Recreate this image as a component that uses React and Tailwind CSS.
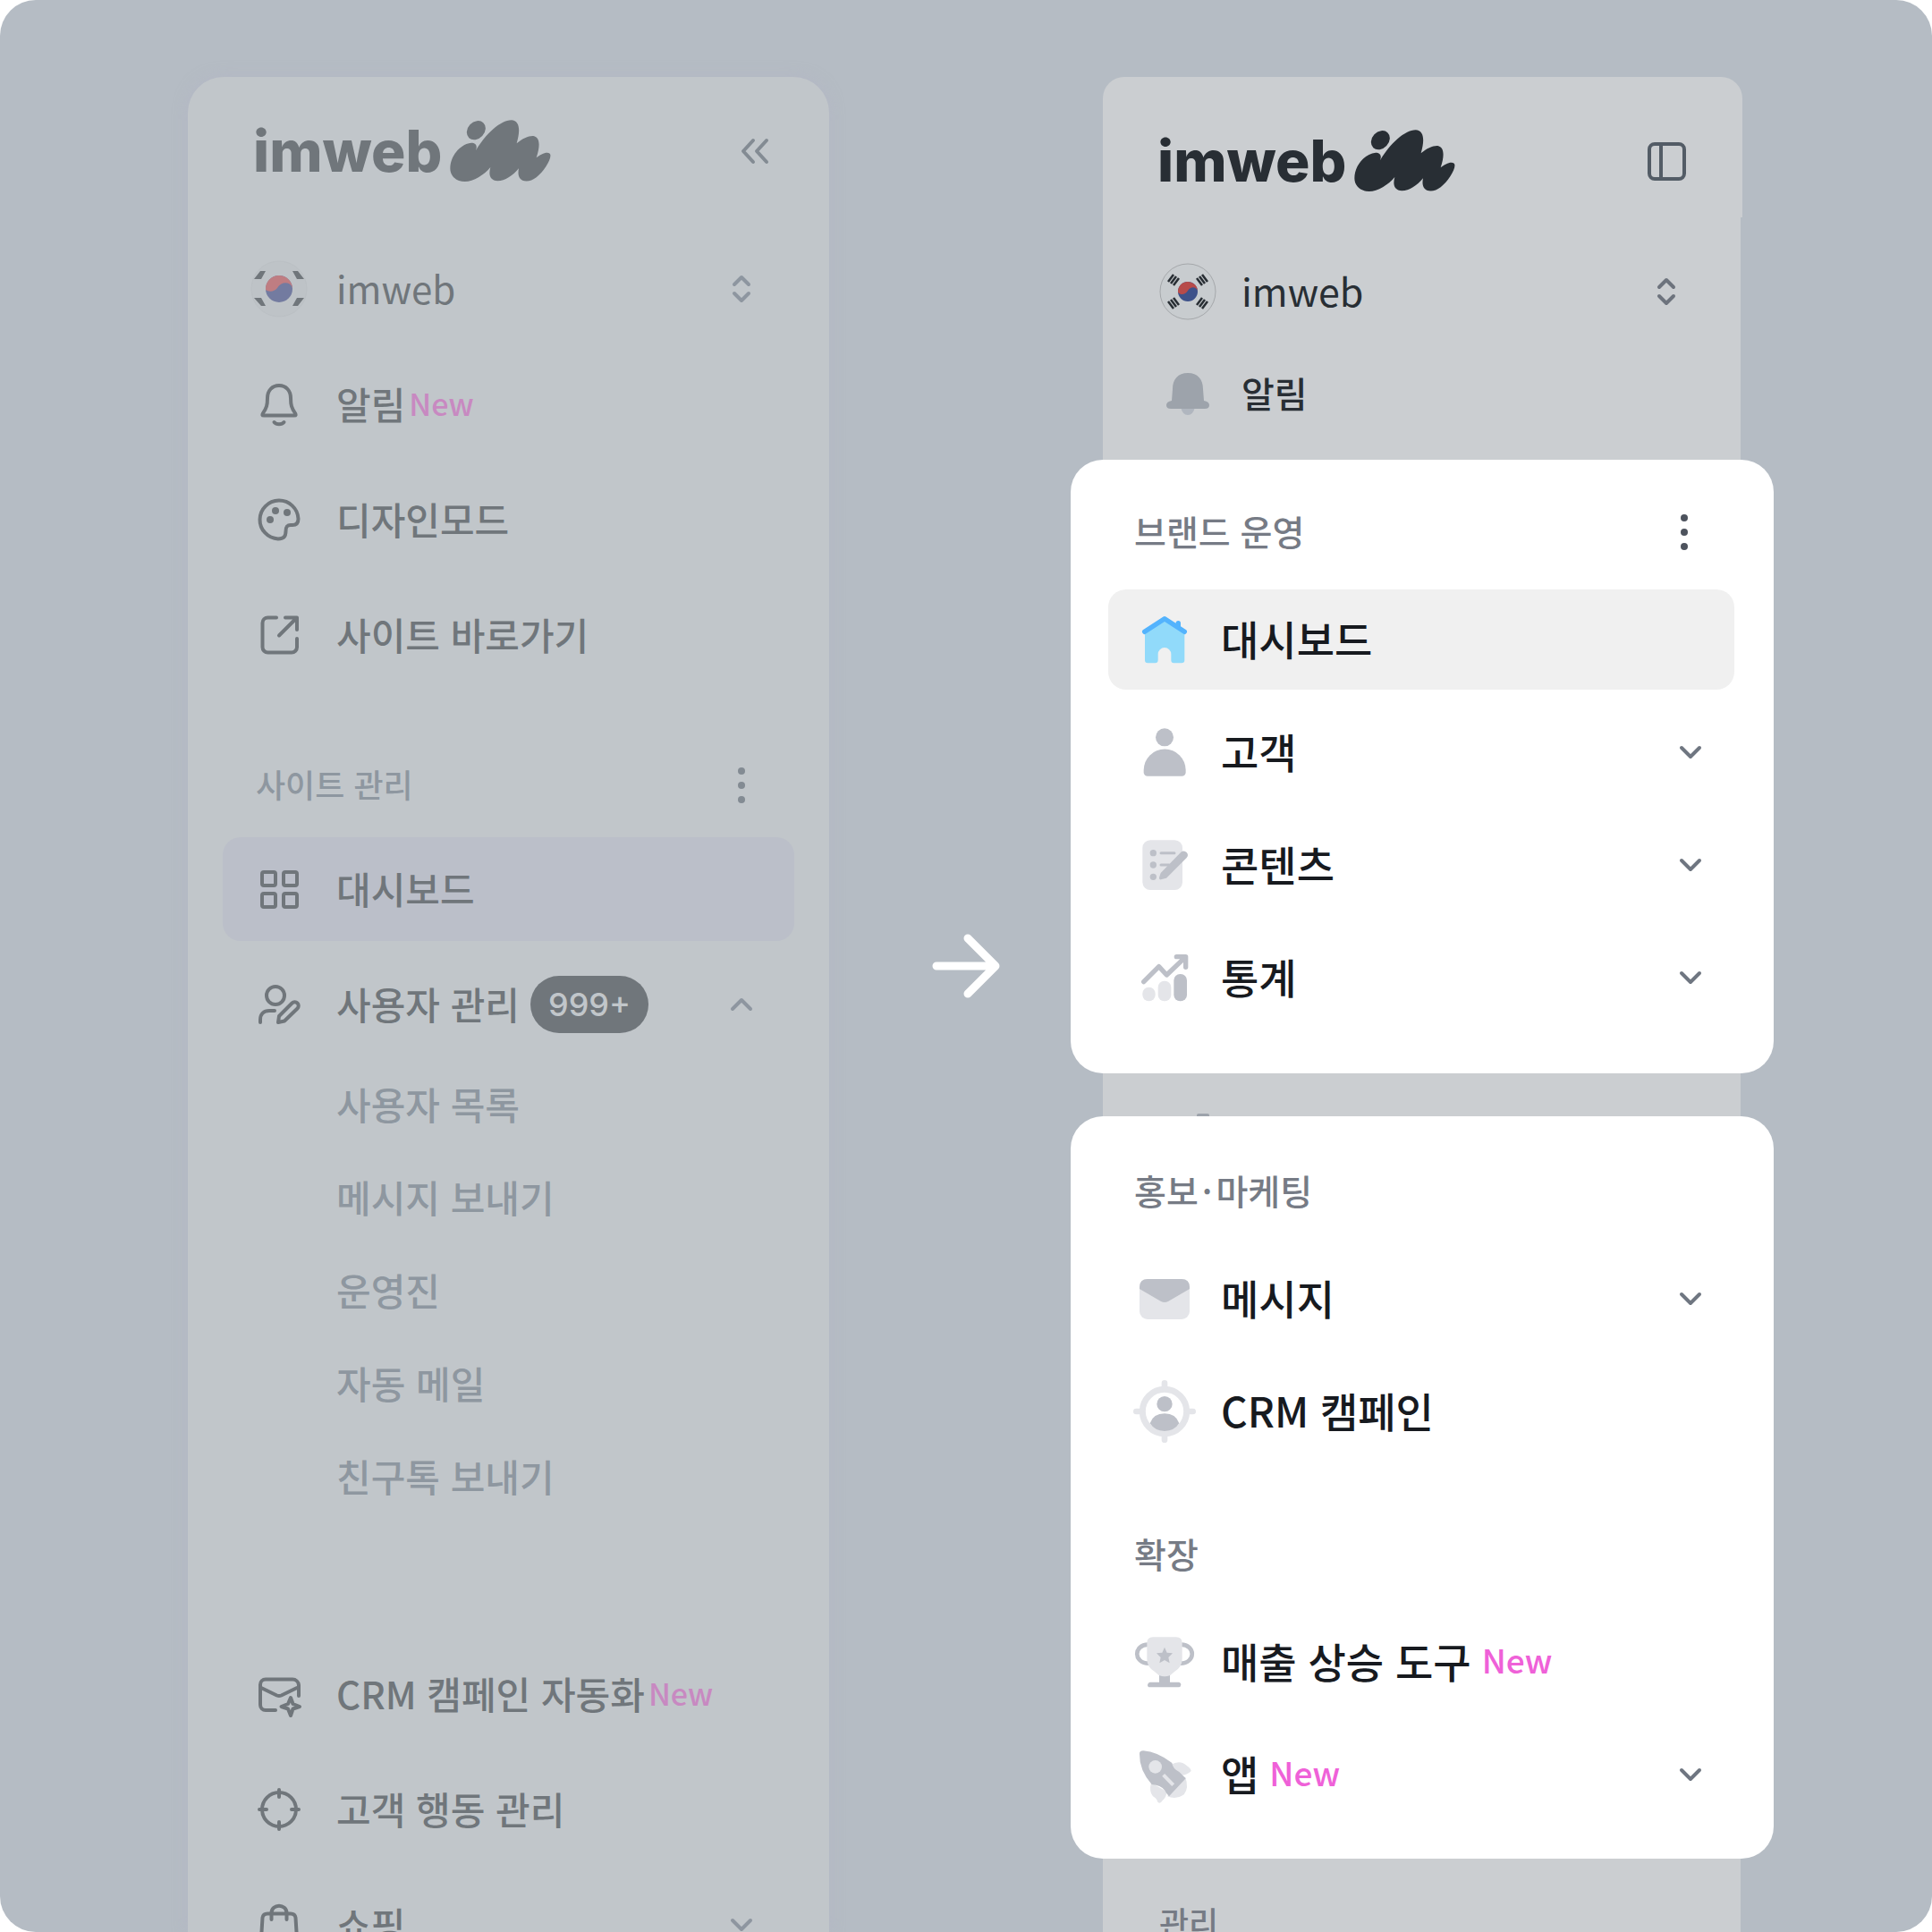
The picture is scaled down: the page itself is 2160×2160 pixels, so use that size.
import React from 'react';

const Logo = () => (
  <a href="#" className="flex items-center gap-[9px]">
    <span className="font-['Inter',sans-serif] text-[64px] leading-[80px] font-extrabold">imweb</span>
    <svg width="114" height="70" viewBox="670 27 342 210" fill="currentColor" aria-hidden="true">
      <ellipse cx="758" cy="62" rx="35" ry="28" transform="rotate(-47 758 62)" />
      <path d="M671 190C671 148 704 108 742 104C757 104 763 113 757 130C790 74 840 28 876 28C906 30 906 65 894 106C914 89 934 80 950 81C973 86 973 115 960 154C975 141 996 132 1005 140C1016 152 986 200 960 220C940 236 914 237 904 222C898 212 899 200 901 190C880 215 855 232 830 232C804 230 799 212 806 186C784 212 750 234 720 234C690 234 671 215 671 190Z" />
    </svg>
  </a>
);

const LineIcon = ({ children }) => (
  <svg width="64" height="64" viewBox="0 0 64 64" fill="none" stroke="currentColor" strokeWidth="4" strokeLinecap="round" strokeLinejoin="round" className="shrink-0" aria-hidden="true">
    {children}
  </svg>
);

const FillIcon = ({ children }) => (
  <svg width="70" height="70" viewBox="0 0 210 210" fill="#bdc0c8" className="shrink-0" aria-hidden="true">
    {children}
  </svg>
);

const ChevronDown = ({ className }) => (
  <svg width="44" height="44" viewBox="0 0 44 44" fill="none" stroke="currentColor" strokeWidth="4" strokeLinecap="round" strokeLinejoin="round" className={`shrink-0 ${className}`} aria-hidden="true">
    <path d="M12 17L22 27L32 17" />
  </svg>
);

const UpDown = ({ className }) => (
  <svg width="44" height="44" viewBox="0 0 44 44" fill="none" stroke="currentColor" strokeWidth="4" strokeLinecap="round" strokeLinejoin="round" className={`shrink-0 ${className}`} aria-hidden="true">
    <path d="M14 17L22 9L30 17M14 27L22 35L30 27" />
  </svg>
);

const MoreDots = () => (
  <svg width="44" height="44" viewBox="0 0 44 44" fill="currentColor" aria-hidden="true">
    <circle cx="22" cy="6" r="4" />
    <circle cx="22" cy="22" r="4" />
    <circle cx="22" cy="38" r="4" />
  </svg>
);

const icons = {
  bell: (
    <LineIcon>
      <path d="M32 11C24 11 19 17 19 25C19 33 18 36 14 42C13 44 13 44.500 15 44.500H49C51 44.500 51 44 50 42C46 36 45 33 45 25C45 17 40 11 32 11Z" />
      <path d="M26.500 52C29 55 35 55 37.500 52" />
    </LineIcon>
  ),
  palette: (
    <LineIcon>
      <path d="M31 53.500A21.500 21.500 0 1 1 53.500 31C53.500 36 51 38 47 38H45C41 38 39.500 40 39.500 45C39.500 51 37 53.500 31 53.500Z" />
      <g fill="currentColor" stroke="none">
        <circle cx="28" cy="22" r="4" />
        <circle cx="41" cy="24" r="4" />
        <circle cx="22" cy="32" r="4" />
      </g>
    </LineIcon>
  ),
  external: (
    <LineIcon>
      <path d="M29 12.500H19.500A6 6 0 0 0 13.500 18.500V45.500A6 6 0 0 0 19.500 51.500H46A6 6 0 0 0 52 45.500V36" />
      <path d="M39 12.500H52V26M51 13.500L32 32.500" />
    </LineIcon>
  ),
  grid: (
    <LineIcon>
      <rect x="13" y="13" width="15" height="15" rx="2" />
      <rect x="37" y="13" width="15" height="15" rx="2" />
      <rect x="13" y="37" width="15" height="15" rx="2" />
      <rect x="37" y="37" width="15" height="15" rx="2" />
    </LineIcon>
  ),
  userEdit: (
    <LineIcon>
      <circle cx="28" cy="22" r="10" />
      <path d="M11 52V49C11 43 15 39 21 39H27" />
      <path d="M31 52L32 45L46.500 30.500A4 4 0 0 1 52.500 36.500L38 50.500Z" />
    </LineIcon>
  ),
  mail: (
    <LineIcon>
      <path d="M54 34V22A7 7 0 0 0 47 15.500H17A6 6 0 0 0 11 21.500V44A6 6 0 0 0 17 50H28" />
      <path d="M12 25L29.500 33.500Q32 34.500 34.500 33.500L52 25" />
      <path d="M45 36L47.500 43L55 46L47.500 48.500L45 56L42 48.500L34.500 46L42 43Z" />
    </LineIcon>
  ),
  target: (
    <LineIcon>
      <circle cx="32" cy="32" r="19" />
      <path d="M32 10V18M32 46V54M10 32H18M46 32H54" />
    </LineIcon>
  ),
  bag: (
    <LineIcon>
      <path d="M19 19.500H45C48 19.500 50 21 50.500 24L52 48A6 6 0 0 1 46 54H18A6 6 0 0 1 12 48L13.500 24C14 21 16 19.500 19 19.500Z" />
      <path d="M23.500 26V19C23.500 8 40.500 8 40.500 19V26" />
    </LineIcon>
  ),
  home: (
    <FillIcon>
      <path fill="#91dafa" d="M39 72L105 30L172 72V174Q172 184 162 184H136Q127 184 127 174V154A22 22 0 0 0 83 154V174Q83 184 73 184H49Q39 184 39 174Z" />
      <path fill="none" stroke="#53b3fd" strokeWidth="16" strokeLinecap="round" strokeLinejoin="round" d="M38 79L105 35L172 79M151 50V62" />
    </FillIcon>
  ),
  user: (
    <FillIcon>
      <circle cx="105" cy="55" r="30" />
      <path d="M35 165A70 70 0 0 1 176 165V174Q174 185 163 185H48Q37 185 35 174Z" />
    </FillIcon>
  ),
  content: (
    <FillIcon>
      <rect x="31" y="22" width="134" height="167" rx="26" fill="#e4e5e9" />
      <circle cx="67" cy="65" r="11" />
      <circle cx="67" cy="105" r="11" />
      <circle cx="67" cy="145" r="11" />
      <path fill="none" stroke="#bdc0c8" strokeWidth="9" strokeLinecap="round" d="M93 65H138M93 105H120" />
      <path d="M92 132L160 62Q170 54 179 63Q187 72 179 81L111 149L93 154Q86 155 87 148Z" />
    </FillIcon>
  ),
  stats: (
    <FillIcon>
      <rect x="31" y="137" width="43" height="47" rx="21" fill="#e4e5e9" />
      <rect x="83" y="116" width="44" height="68" rx="21" fill="#e4e5e9" />
      <rect x="136" y="93" width="44" height="91" rx="21" />
      <path fill="none" stroke="#bdc0c8" strokeWidth="16" strokeLinecap="round" strokeLinejoin="round" d="M35 119L86 68L112 96L174 37M145 35H176V70" />
    </FillIcon>
  ),
  message: (
    <FillIcon>
      <rect x="21" y="39" width="168" height="135" rx="27" fill="#e4e5e9" />
      <path d="M21 72V66Q21 39 48 39H162Q189 39 189 66V72L117 114Q105 120 93 114Z" />
    </FillIcon>
  ),
  crm: (
    <FillIcon>
      <g fill="none" stroke="#e4e5e9" strokeLinecap="round">
        <circle cx="105" cy="105" r="74" strokeWidth="21" />
        <path strokeWidth="20" d="M105 10V24M105 186V200M10 105H24M186 105H200" />
      </g>
      <circle cx="105" cy="80" r="26" />
      <path d="M56 145Q67 112 105 112Q143 112 154 145Q138 170 105 171Q72 170 56 145Z" />
    </FillIcon>
  ),
  trophy: (
    <FillIcon>
      <path fill="none" stroke="#bdc0c8" strokeWidth="14" d="M50 47C0 47 0 110 52 110M160 47C210 47 210 110 158 110" />
      <path fill="#e4e5e9" d="M46 42Q46 22 66 22H144Q164 22 164 42V95Q164 122 138 138L124 150Q105 160 86 150L72 138Q46 122 46 95Z" />
      <path d="M105 56L113 74L132 76L118 90L122 109L105 99L88 109L92 90L78 76L97 74Z" />
      <path d="M87 150Q105 158 123 150V173H152Q160 174 160 182Q159 190 152 190H56Q48 190 48 182Q49 174 56 173H87Z" />
    </FillIcon>
  ),
  rocket: (
    <FillIcon>
      <path fill="#e4e5e9" d="M126 72Q158 54 180 76Q194 86 194 93Q175 112 150 106ZM60 132Q52 162 66 178Q78 184 82 197Q90 205 98 192Q112 180 112 162ZM114 178L174 112Q188 150 170 172Q145 190 114 178Z" />
      <path d="M21 36Q20 25 34 25Q80 28 130 66Q132 85 154 96L176 118L120 178Q112 170 106 158Q92 140 62 138Q20 90 21 36Z" />
      <circle cx="74" cy="79" r="22" fill="#e4e5e9" />
      <path fill="none" stroke="#e4e5e9" strokeWidth="12" d="M101 106L134 140" />
    </FillIcon>
  ),
};

const topMenu = [
  { icon: 'bell', label: '알림', isNew: true },
  { icon: 'palette', label: '디자인모드' },
  { icon: 'external', label: '사이트 바로가기' },
];

const userMenu = ['사용자 목록', '메시지 보내기', '운영진', '자동 메일', '친구톡 보내기'];

const bottomMenu = [
  { icon: 'mail', label: 'CRM 캠페인 자동화', isNew: true },
  { icon: 'target', label: '고객 행동 관리' },
  { icon: 'bag', label: '쇼핑', open: true },
];

const brandMenu = [
  { icon: 'home', label: '대시보드', active: true },
  { icon: 'user', label: '고객', open: true },
  { icon: 'content', label: '콘텐츠', open: true },
  { icon: 'stats', label: '통계', open: true },
];

const marketingMenu = [
  { icon: 'message', label: '메시지', open: true },
  { icon: 'crm', label: 'CRM 캠페인' },
];

const extendMenu = [
  { icon: 'trophy', label: '매출 상승 도구', isNew: true },
  { icon: 'rocket', label: '앱', isNew: true, open: true },
];

const OldItem = ({ item }) => (
  <li>
    <a href="#" className="flex h-[116px] items-center gap-8 pl-[31px] pr-[37px]">
      {icons[item.icon]}
      <span className="flex flex-1 items-center gap-1 pb-1 whitespace-nowrap">
        {item.label}
        {item.isNew && <span className="text-[34px] text-[#c889c1]">New</span>}
      </span>
      {item.open && <ChevronDown className="text-[#8e96a0]" />}
    </a>
  </li>
);

const NewItem = ({ item }) => (
  <li>
    <a href="#" className={`flex h-[112px] items-center gap-7 rounded-[20px] pl-7 pr-[27px] ${item.active ? 'bg-[#f0f0f0]' : ''}`}>
      {icons[item.icon]}
      <span className="flex flex-1 items-center gap-3 pb-1 whitespace-nowrap">
        {item.label}
        {item.isNew && <span className="text-[37px] text-[#ef61d8]">New</span>}
      </span>
      {item.open && <ChevronDown className="text-[#6f7681]" />}
    </a>
  </li>
);

const NewList = ({ items }) => (
  <ul className="flex flex-col gap-[14px] text-[46px] text-[#171a1f]">
    {items.map((item) => <NewItem key={item.label} item={item} />)}
  </ul>
);

const NewTitle = ({ children, action }) => (
  <div className="mb-[6px] flex h-[116px] items-center justify-between pl-[29px] pr-[34px]">
    <h2 className="pb-1 text-[39px] text-[#767b85]">{children}</h2>
    {action}
  </div>
);

const OldSidebar = () => (
  <nav className="overflow-hidden rounded-t-[40px] bg-[#c1c6ca] px-[39px] pt-[25px] text-[42px] font-medium text-[#70767b] shadow-[0_0_16px_rgba(180,180,200,0.5)]">
    <div className="flex h-[116px] items-center justify-between pl-[34px] pr-[13px]">
      <Logo />
      <button type="button" aria-label="메뉴 접기" className="text-[#838b93]">
        <svg width="64" height="64" viewBox="0 0 64 64" fill="none" stroke="currentColor" strokeWidth="4" strokeLinecap="round" strokeLinejoin="round">
          <path d="M31 20L20 32L31 44M46 20L35 32L46 44" />
        </svg>
      </button>
    </div>
    <button type="button" className="mt-[38px] flex h-[116px] w-full items-center gap-8 pl-[31px] pr-[37px] text-left font-normal">
      <svg width="64" height="64" viewBox="0 0 64 64" className="shrink-0" aria-hidden="true">
        <circle cx="32" cy="32" r="31" fill="#bec3c7" stroke="#bbc0c4" />
        <circle cx="32" cy="32" r="15" fill="#737ba0" />
        <path fill="#bf7d82" d="M17 33A15 15 0 0 1 47 31C44 23 34 24 30 31C26 36 20 35 17 33Z" />
        <path fill="#70767b" d="M11 12H17L12 21H4ZM47 12H53L60 21H52ZM4 42H12L17 51H12ZM52 42H60L53 51H47Z" />
      </svg>
      <span className="flex-1 pb-1">imweb</span>
      <UpDown className="text-[#8e96a0]" />
    </button>
    <ul className="mt-[13px] flex flex-col gap-[13px]">
      {topMenu.map((item) => <OldItem key={item.label} item={item} />)}
    </ul>
    <div className="mt-[52px] flex h-[116px] items-center justify-between pl-[37px] pr-[37px]">
      <h2 className="pb-1 text-[36px] text-[#8e97a0]">사이트 관리</h2>
      <button type="button" aria-label="더보기" className="text-[#838b93]"><MoreDots /></button>
    </div>
    <a href="#" className="flex h-[116px] items-center gap-8 rounded-[20px] bg-[#bbbfc9] pl-[31px]">
      {icons.grid}
      <span className="pb-1">대시보드</span>
    </a>
    <button type="button" className="mt-[13px] flex h-[116px] w-full items-center gap-8 pl-[31px] pr-[37px] text-left">
      {icons.userEdit}
      <span className="flex flex-1 items-center gap-3 whitespace-nowrap">
        <span className="pb-1">사용자 관리</span>
        <span className="flex h-16 items-center rounded-full bg-[#70767b] px-5 font-['Inter',sans-serif] text-[36px] text-[#c1c6ca]">999+</span>
      </span>
      <ChevronDown className="rotate-180 text-[#8e96a0]" />
    </button>
    <ul className="text-[#8e97a0]">
      {userMenu.map((label) => (
        <li key={label}>
          <a href="#" className="flex h-[104px] items-center pl-[127px]">{label}</a>
        </li>
      ))}
    </ul>
    <ul className="mt-[135px] flex flex-col gap-[13px]">
      {bottomMenu.map((item) => <OldItem key={item.label} item={item} />)}
    </ul>
  </nav>
);

const NewSidebar = () => (
  <nav className="flex flex-col font-medium">
    <div className="ml-9 mr-[35px] flex h-[157px] shrink-0 items-center justify-between rounded-t-[24px] bg-[#cbced1] pl-[61px] pr-[53px] pt-[31px] text-[#282e34]">
      <Logo />
      <button type="button" aria-label="사이드바" className="text-[#535c66]">
        <svg width="64" height="64" viewBox="0 0 64 64" fill="none" stroke="currentColor" strokeWidth="4">
          <rect x="13" y="13" width="39" height="39" rx="6" />
          <path d="M26 13V52" />
        </svg>
      </button>
    </div>
    <div className="ml-9 mr-[37px] bg-[#cbced1] pb-[21px] pl-[63px] pr-[61px] pt-[31px] text-[43px] text-[#282e34]">
      <button type="button" className="flex h-[104px] w-full items-center gap-7 text-left font-normal">
        <svg width="64" height="64" viewBox="0 0 64 64" className="shrink-0" aria-hidden="true">
          <circle cx="32" cy="32" r="31" fill="#c8cccf" stroke="#a5a8ab" />
          <circle cx="32" cy="32" r="11" fill="#3e528a" />
          <path fill="#b74b4a" d="M21 33A11 11 0 0 1 43 31C41 26 35 26 32 31C29 36 24 36 21 33Z" />
          <g stroke="#282e34" strokeWidth="2.500">
            <path d="M10 21L16 13M13 23L19 15M16 25L22 17" />
            <path d="M54 21L48 13M51 23L45 15M48 25L42 17" />
            <path d="M10 43L16 51M13 41L19 49M16 39L22 47" />
            <path d="M54 43L48 51M51 41L45 49M48 39L42 47" />
          </g>
        </svg>
        <span className="flex-1 pb-1">imweb</span>
        <UpDown className="text-[#6d737d]" />
      </button>
      <a href="#" className="mt-[11px] flex h-[104px] items-center gap-7 text-[40px]">
        <svg width="64" height="64" viewBox="0 0 64 64" className="shrink-0" aria-hidden="true">
          <path fill="#b0b6bf" d="M24 46H40Q38 55 32 55Q26 55 24 46Z" />
          <path fill="#9da3ab" d="M32 8C43 8 49 15 49 26L50 39Q56 40 56 44Q56 48 51 48H13Q8 48 8 44Q8 40 14 39L15 26C15 15 21 8 32 8Z" />
        </svg>
        <span className="pb-1">알림</span>
      </a>
    </div>
    <section className="rounded-[36px] bg-white pb-[51px] pl-[42px] pr-11 pt-[23px]">
      <NewTitle action={<button type="button" aria-label="더보기" className="text-[#4d535d]"><MoreDots /></button>}>
        브랜드 운영
      </NewTitle>
      <NewList items={brandMenu} />
    </section>
    <div className="ml-9 mr-[37px] flex h-12 shrink-0 items-end bg-[#cbced1] pl-[105px]">
      <span className="h-[3px] w-[14px] rounded-t-[2px] bg-[#9da3ab]" />
    </div>
    <section className="rounded-[36px] bg-white pb-[38px] pl-[42px] pr-11 pt-[26px]">
      <NewTitle>홍보<span className="mx-1">·</span>마케팅</NewTitle>
      <NewList items={marketingMenu} />
      <div className="mt-[46px]">
        <NewTitle>확장</NewTitle>
        <NewList items={extendMenu} />
      </div>
    </section>
    <div className="ml-9 mr-[37px] flex-1 bg-[#cbced1] pl-[63px] pt-10">
      <h2 className="text-[36px] leading-[60px] text-[#767b85]">관리</h2>
    </div>
  </nav>
);

const App = () => {
  return (
    <div className="bg-white">
      <main lang="ko" className="grid h-screen grid-cols-[717fr_270px_786fr] grid-rows-[100%] overflow-hidden rounded-[40px] bg-[#b5bcc4] pl-[210px] pr-[177px] pt-[86px] font-['Noto_Sans_CJK_KR',sans-serif]">
        <OldSidebar />
        <div className="flex items-center justify-center pb-[86px] pl-9">
          <svg width="80" height="80" viewBox="0 0 80 80" fill="none" stroke="white" strokeWidth="9" strokeLinecap="round" strokeLinejoin="round" aria-hidden="true">
            <path d="M7 40H72M42 9L73 40L42 71" />
          </svg>
        </div>
        <NewSidebar />
      </main>
    </div>
  );
};

export default App;
